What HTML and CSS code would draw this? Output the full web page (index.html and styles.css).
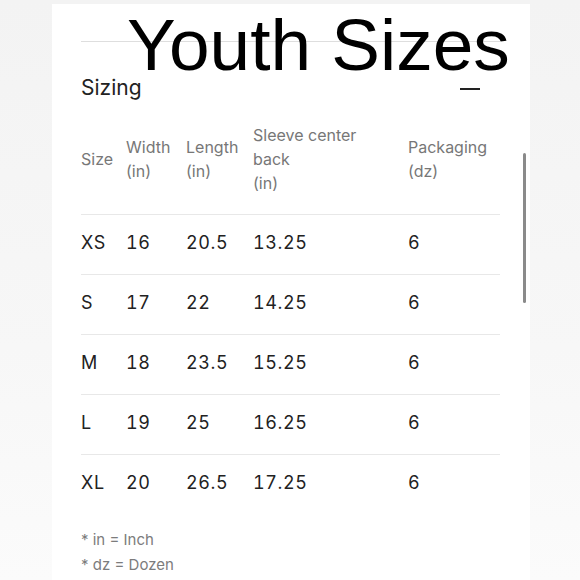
FILE: index.html
```html
<!DOCTYPE html>
<html>
<head>
<meta charset="utf-8">
<link rel="stylesheet" href="styles.css">
</head>
<body>
<div class="page">
  <div class="panel">
    <div class="section">
      <div class="section-head">
        <span class="section-title">Sizing</span>
        <span class="minus"></span>
      </div>
      <table class="sizes">
        <colgroup>
          <col class="c1"><col class="c2"><col class="c3"><col class="c4"><col class="c5">
        </colgroup>
        <thead>
          <tr>
            <th>Size</th>
            <th>Width<br>(in)</th>
            <th>Length<br>(in)</th>
            <th>Sleeve center<br>back<br>(in)</th>
            <th>Packaging<br>(dz)</th>
          </tr>
        </thead>
        <tbody>
          <tr><td>XS</td><td>16</td><td>20.5</td><td>13.25</td><td>6</td></tr>
          <tr><td>S</td><td>17</td><td>22</td><td>14.25</td><td>6</td></tr>
          <tr><td>M</td><td>18</td><td>23.5</td><td>15.25</td><td>6</td></tr>
          <tr><td>L</td><td>19</td><td>25</td><td>16.25</td><td>6</td></tr>
          <tr><td>XL</td><td>20</td><td>26.5</td><td>17.25</td><td>6</td></tr>
        </tbody>
      </table>
      <div class="notes">
        <div>* in = Inch</div>
        <div>* dz = Dozen</div>
      </div>
    </div>
    <div class="scrollbar"></div>
    <div class="overlay-title">Youth Sizes</div>
  </div>
</div>
</body>
</html>
```
FILE: styles.css
```css
html, body {
  margin: 0;
  padding: 0;
}
body {
  width: 580px;
  height: 580px;
  overflow: hidden;
  background: linear-gradient(to bottom, #f3f3f3 0%, #f7f7f7 60%, #fbfbfb 100%);
  font-family: Inter, "Noto Sans", sans-serif;
}
.page {
  padding: 4px 0 0 52px;
}
.panel {
  position: relative;
  width: 478px;
  height: 576px;
  background: #fff;
  padding: 37px 0 0 29px;
  box-sizing: border-box;
}
.section {
  width: 419px;
  border-top: 1px solid #dedede;
}
.section-head {
  display: flex;
  justify-content: space-between;
  align-items: center;
  margin-top: 32px;
  height: 28px;
  margin-bottom: 3px;
}
.section-title {
  font-size: 21px;
  line-height: 28px;
  color: #222;
}
.minus {
  width: 20px;
  height: 2px;
  background: #222;
  margin-right: 20px;
  margin-top: 2px;
}
.sizes {
  width: 419px;
  table-layout: fixed;
  border-collapse: collapse;
}
.c1 { width: 45px; }
.c2 { width: 60px; }
.c3 { width: 67px; }
.c4 { width: 155px; }
.c5 { width: 92px; }
.sizes th {
  text-align: left;
  font-weight: 400;
  font-size: 16px;
  line-height: 24px;
  color: #777;
  padding: 18px 0 19px 0;
  vertical-align: middle;
}
.sizes td {
  height: 60px;
  padding: 0 0 4px 0;
  box-sizing: border-box;
  font-size: 18px;
  color: #222;
  font-feature-settings: "tnum" 1;
  letter-spacing: 0.6px;
  border-top: 1px solid #e8e8e8;
  vertical-align: middle;
}
.notes {
  margin-top: 12px;
  font-size: 15px;
  line-height: 25px;
  color: #7c7c7c;
}
.scrollbar {
  position: absolute;
  left: 471px;
  top: 149px;
  width: 3px;
  height: 150px;
  border-radius: 2px;
  background: #8a8a8a;
}
.overlay-title {
  position: absolute;
  left: 75px;
  top: 5px;
  font-family: "Liberation Sans", Arial, sans-serif;
  font-size: 73px;
  line-height: 72px;
  color: #000;
  white-space: nowrap;
}
```
